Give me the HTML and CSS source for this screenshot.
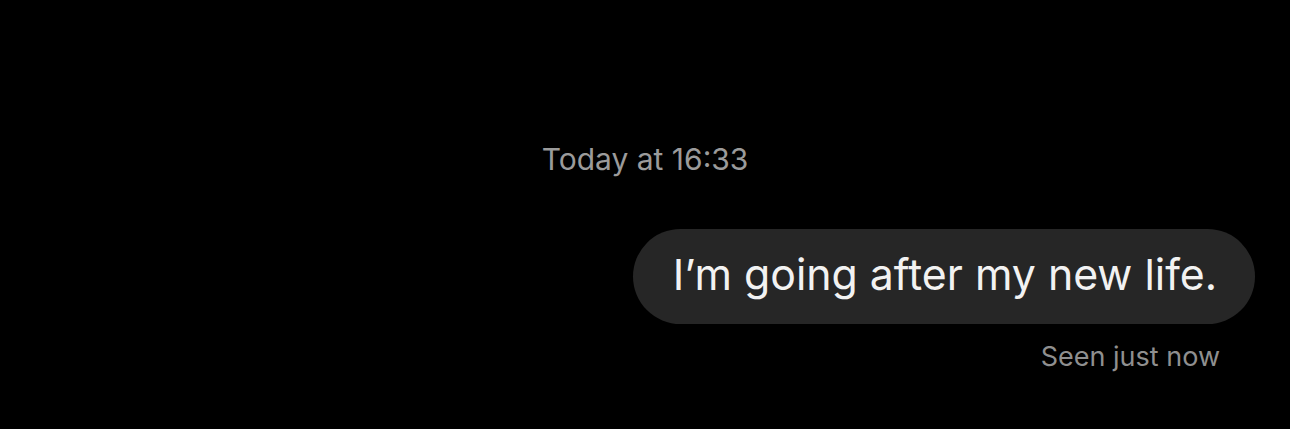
FILE: index.html
```html
<!DOCTYPE html>
<html>
<head>
<meta charset="utf-8">
<link rel="stylesheet" href="styles.css">
</head>
<body>
<div class="chat">
  <div class="time">Today at 16:33</div>
  <div class="row">
    <div class="bubble">I’m going after my new life.</div>
  </div>
  <div class="seen">Seen just now</div>
</div>
</body>
</html>
```
FILE: styles.css
```css
html, body {
  margin: 0;
  padding: 0;
  background: #000;
  width: 1290px;
  height: 429px;
  overflow: hidden;
}
.chat {
  display: flex;
  flex-direction: column;
  font-family: Inter, "Liberation Sans", sans-serif;
  padding-top: 141px;
}
.time {
  text-align: center;
  color: #9b9b9b;
  font-size: 30px;
  line-height: 36px;
}
.row {
  display: flex;
  justify-content: flex-end;
  padding-right: 35px;
  margin-top: 52px;
}
.bubble {
  background: #262626;
  color: #f2f2f2;
  font-size: 42.8px;
  line-height: 92px;
  height: 95px;
  box-sizing: border-box;
  padding: 0 38px 3px 40px;
  border-radius: 48px;
  white-space: nowrap;
}
.seen {
  align-self: flex-end;
  margin-right: 70px;
  margin-top: 17px;
  color: #8f8f8f;
  font-size: 27px;
  line-height: 32px;
}
```
